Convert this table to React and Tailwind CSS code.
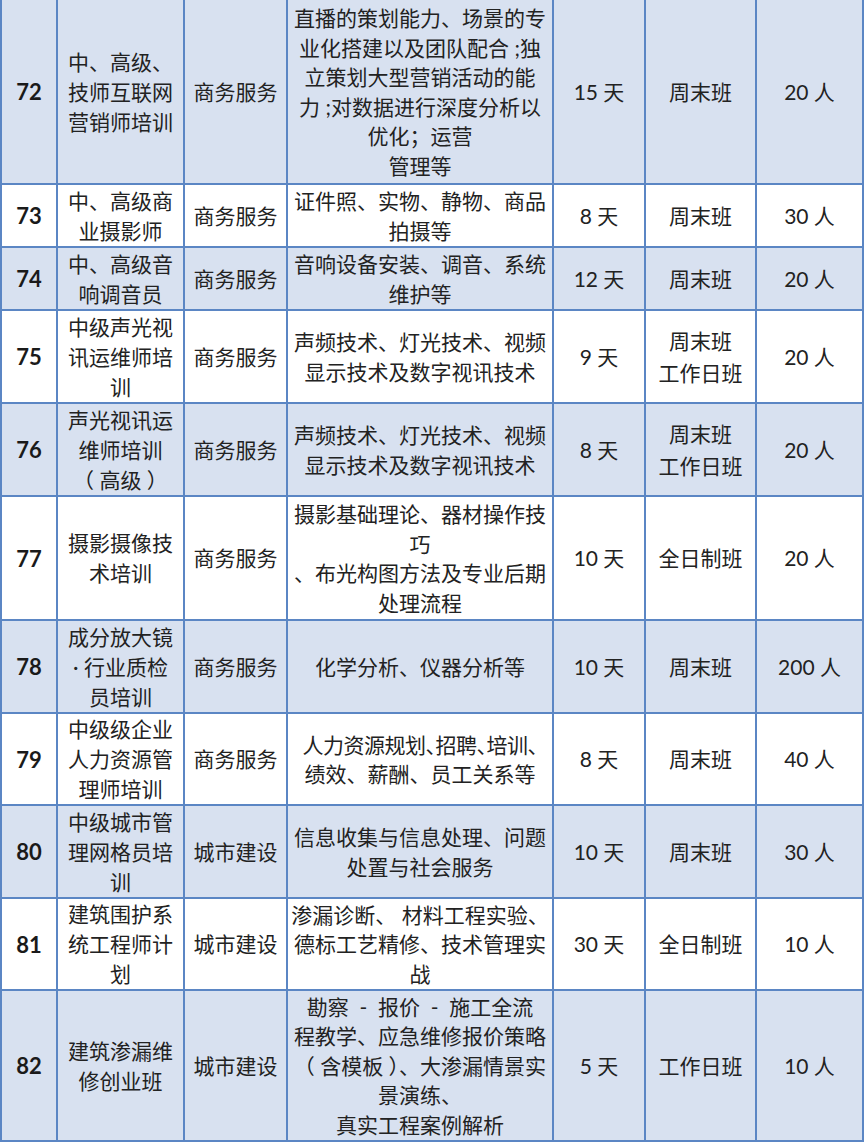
import React from "react";

const rows = [
  {
    no: "72",
    h: "h-[185px]",
    name: ["中、高级、", "技师互联网", "营销师培训"],
    cat: "商务服务",
    content: [
      "直播的策划能力、场景的专",
      "业化搭建以及团队配合 ;独",
      "立策划大型营销活动的能",
      "力 ;对数据进行深度分析以",
      "优化；运营",
      "管理等",
    ],
    days: "15 天",
    cls: ["周末班"],
    people: "20 人",
  },
  {
    no: "73",
    h: "h-[63px]",
    name: ["中、高级商", "业摄影师"],
    cat: "商务服务",
    content: ["证件照、实物、静物、商品", "拍摄等"],
    days: "8 天",
    cls: ["周末班"],
    people: "30 人",
  },
  {
    no: "74",
    h: "h-[63px]",
    name: ["中、高级音", "响调音员"],
    cat: "商务服务",
    content: ["音响设备安装、调音、系统", "维护等"],
    days: "12 天",
    cls: ["周末班"],
    people: "20 人",
  },
  {
    no: "75",
    h: "h-[93px]",
    name: ["中级声光视", "讯运维师培", "训"],
    cat: "商务服务",
    content: ["声频技术、灯光技术、视频", "显示技术及数字视讯技术"],
    days: "9 天",
    cls: ["周末班", "工作日班"],
    people: "20 人",
  },
  {
    no: "76",
    h: "h-[93px]",
    name: ["声光视讯运", "维师培训", "（ 高级 ）"],
    cat: "商务服务",
    content: ["声频技术、灯光技术、视频", "显示技术及数字视讯技术"],
    days: "8 天",
    cls: ["周末班", "工作日班"],
    people: "20 人",
  },
  {
    no: "77",
    h: "h-[124px]",
    name: ["摄影摄像技", "术培训"],
    cat: "商务服务",
    content: [
      "摄影基础理论、器材操作技",
      "巧",
      "、布光构图方法及专业后期",
      "处理流程",
    ],
    days: "10 天",
    cls: ["全日制班"],
    people: "20 人",
  },
  {
    no: "78",
    h: "h-[93px]",
    name: ["成分放大镜", "· 行业质检", "员培训"],
    cat: "商务服务",
    content: ["化学分析、仪器分析等"],
    days: "10 天",
    cls: ["周末班"],
    people: "200 人",
  },
  {
    no: "79",
    h: "h-[92px]",
    name: ["中级级企业", "人力资源管", "理师培训"],
    cat: "商务服务",
    content: ["人力资源规划、招聘、培训、", "绩效、薪酬、员工关系等"],
    tight: 0,
    days: "8 天",
    cls: ["周末班"],
    people: "40 人",
  },
  {
    no: "80",
    h: "h-[93px]",
    name: ["中级城市管", "理网格员培", "训"],
    cat: "城市建设",
    content: ["信息收集与信息处理、问题", "处置与社会服务"],
    days: "10 天",
    cls: ["周末班"],
    people: "30 人",
  },
  {
    no: "81",
    h: "h-[92px]",
    name: ["建筑围护系", "统工程师计", "划"],
    cat: "城市建设",
    content: ["渗漏诊断、 材料工程实验、", "德标工艺精修、技术管理实", "战"],
    days: "30 天",
    cls: ["全日制班"],
    people: "10 人",
  },
  {
    no: "82",
    h: "h-[151px]",
    name: ["建筑渗漏维", "修创业班"],
    cat: "城市建设",
    content: [
      "勘察  -  报价  -  施工全流",
      "程教学、应急维修报价策略",
      "（ 含模板 ）、大渗漏情景实",
      "景演练、",
      "真实工程案例解析",
    ],
    days: "5 天",
    cls: ["工作日班"],
    people: "10 人",
  },
];

const Cell = ({ className = "", children }) => (
  <div
    className={`flex flex-col items-center justify-center text-center border-r-2 border-[#5b86c4] ${className}`}
  >
    {children}
  </div>
);

const Lines = ({ lines, lh = "leading-[30px]", tight }) =>
  lines.map((l, i) => (
    <div
      key={i}
      className={`whitespace-pre ${lh} ${
        tight === i ? "[font-feature-settings:'halt'] tracking-[-0.5px]" : ""
      }`}
    >
      {l}
    </div>
  ));

const App = () => {
  return (
    <div className="w-[864px] h-[1144px] bg-white font-['Lato','Noto_Sans_CJK_SC',sans-serif] text-[21px] text-[#222222]">
      <div className="border-l-2 border-[#5b86c4]">
        {rows.map((r, i) => (
          <div
            key={r.no}
            className={`grid grid-cols-[56px_127px_103px_266px_92px_111px_107px] border-b-2 border-[#5b86c4] ${r.h} ${
              i % 2 === 0 ? "bg-[#d8e1f0]" : "bg-white"
            }`}
          >
            <Cell className="font-bold text-[22px] text-[#1a1a1a]">{r.no}</Cell>
            <Cell>
              <Lines lines={r.name} />
            </Cell>
            <Cell>{r.cat}</Cell>
            <Cell>
              <Lines lines={r.content} lh="leading-[29.5px]" tight={r.tight} />
            </Cell>
            <Cell>{r.days}</Cell>
            <Cell>
              <Lines lines={r.cls} lh="leading-[32px]" />
            </Cell>
            <Cell>{r.people}</Cell>
          </div>
        ))}
      </div>
    </div>
  );
};

export default App;
